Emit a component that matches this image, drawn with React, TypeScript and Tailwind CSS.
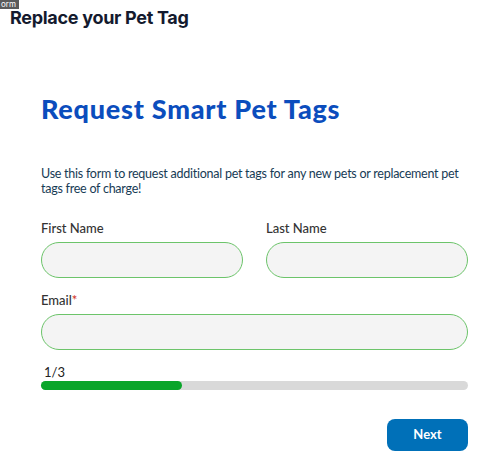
export default function App() {
  return (
    <div className="relative min-h-[475px] w-[500px] bg-white font-['Inter',sans-serif]">
      {/* tab label peeking in at the top-left */}
      <div className="absolute left-0 top-0 h-[9px] w-[19px] overflow-hidden bg-[#5a5a5a]">
        <span className="block pl-[1px] text-[8px] leading-[8px] text-white">orm</span>
      </div>

      <h1 className="pl-[10px] pt-[9px] text-[18px] font-bold leading-[18px] tracking-[-0.3px] text-[#141a2e]">
        Replace your Pet Tag
      </h1>

      <div className="ml-[41px] mr-[32px] font-['Lato',sans-serif]">
        <h2 className="mt-[66px] text-[27px] font-black leading-[32px] tracking-[0.75px] text-[#0b4dbd]">
          Request Smart Pet Tags
        </h2>

        <p className="mt-[41px] text-[12.5px] leading-[15px] tracking-[-0.25px] text-[#173b55]">
          Use this form to request additional pet tags for any new pets or replacement pet tags free of charge!
        </p>

        <div className="mt-[24px] grid grid-cols-2 gap-x-[23px]">
          <div className="flex flex-col">
            <label className="text-[13px] font-medium leading-[16px] text-[#333]">First Name</label>
            <input className="mt-[6px] h-[36px] rounded-full border border-[#6cc46a] bg-[#f4f4f4] px-4 outline-none" />
          </div>
          <div className="flex flex-col">
            <label className="text-[13px] font-medium leading-[16px] text-[#333]">Last Name</label>
            <input className="mt-[6px] h-[36px] rounded-full border border-[#6cc46a] bg-[#f4f4f4] px-4 outline-none" />
          </div>
        </div>

        <div className="mt-[14px] flex flex-col">
          <label className="text-[13px] font-medium leading-[16px] text-[#333]">
            Email<span className="text-[#d0341c]">*</span>
          </label>
          <input className="mt-[6px] h-[36px] rounded-full border border-[#6cc46a] bg-[#f4f4f4] px-4 outline-none" />
        </div>

        <div className="mt-[14px]">
          <div className="pl-[3px] text-[13px] leading-[16px] text-[#222]">1/3</div>
          <div className="mt-[1px] h-[9px] w-full rounded-full bg-[#d9d9d9]">
            <div className="h-full w-[33%] rounded-full bg-[#0aa52a]" />
          </div>
        </div>

        <div className="mt-[29px] flex justify-end">
          <button className="h-[32px] w-[81px] rounded-[8px] bg-[#0070b8] text-[13px] font-bold text-white">
            Next
          </button>
        </div>
      </div>
    </div>
  );
}
